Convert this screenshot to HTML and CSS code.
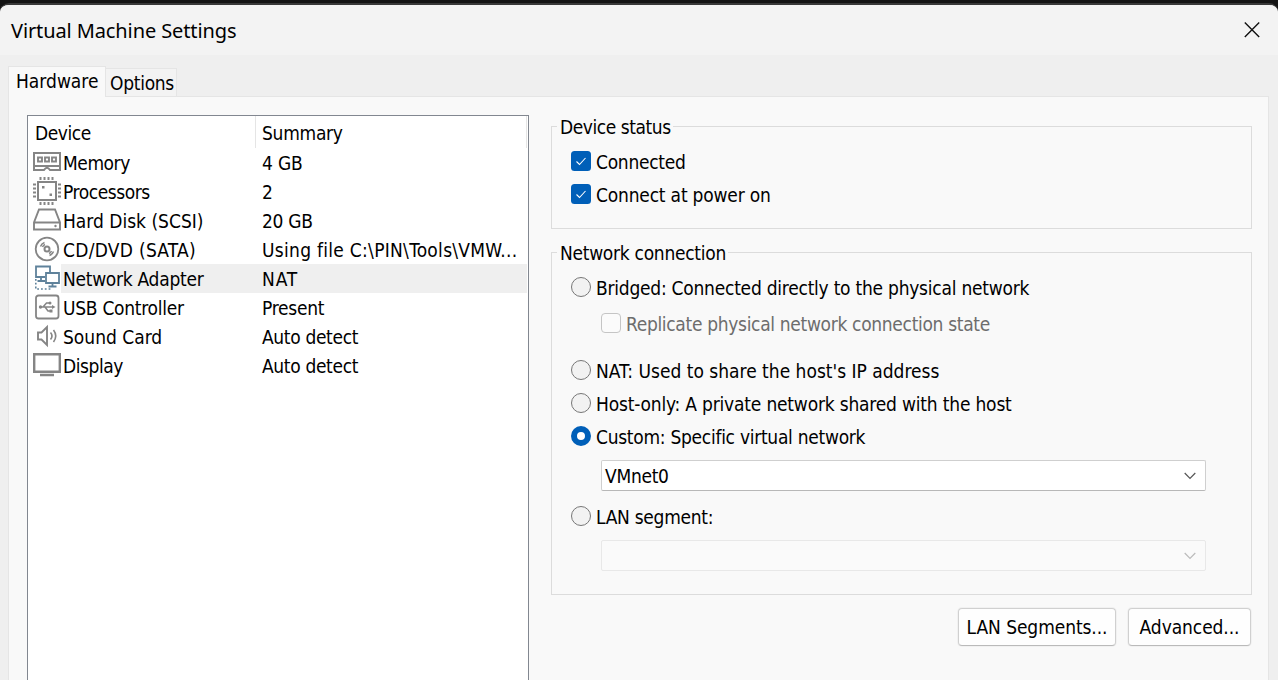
FILE: index.html
```html
<!DOCTYPE html>
<html lang="en">
<head>
<meta charset="utf-8">
<title>Virtual Machine Settings</title>
<link rel="stylesheet" href="styles.css">
</head>
<body>
<div class="desktop">
<main class="window">
  <header class="titlebar">
    <h1 class="title">Virtual Machine Settings</h1>
    <svg class="close" width="16" height="16" viewBox="0 0 16 16"><path d="M.8.5l14.400 14.400M15.200.5L.8 14.900"/></svg>
  </header>
  <nav class="tabs">
    <div class="tab active"><span class="t even">Hardware</span></div>
    <div class="tab"><span class="t tight">Options</span></div>
  </nav>
  <section class="panel">
    <div class="devices">
      <div class="row head"><div class="name"><span class="t tighter">Device</span></div><div class="summary"><span class="t tight">Summary</span></div></div>
      <div class="row"><svg class="icon" viewBox="0 0 28 28"><path d="M1 5h26v17H17q-3-4.500-6 0H1zM1 18h26" stroke-width="2"/><path d="M5 9.500h4v4H5zM12 9.500h4v4h-4zM19 9.500h4v4h-4z" stroke-width="1.900"/></svg><div class="name"><span class="t tighter">Memory</span></div><div class="summary"><span class="t">4 GB</span></div></div>
      <div class="row"><svg class="icon" viewBox="0 0 28 28"><path d="M5 5h18v18H5z" stroke-width="2"/><path d="M7.500 0v3M11.500 0v3M15.500 0v3M19.500 0v3M7.500 25v3M11.500 25v3M15.500 25v3M19.500 25v3M0 7.500h3M0 11.500h3M0 15.500h3M0 19.500h3M25 7.500h3M25 11.500h3M25 15.500h3M25 19.500h3" stroke-width="2"/><path d="M9 9h2.500v2.500H9zM16.500 16.500H19V19h-2.500z" class="solid"/></svg><div class="name"><span class="t tighter">Processors</span></div><div class="summary"><span class="t">2</span></div></div>
      <div class="row"><svg class="icon" viewBox="0 0 28 28"><path d="M6 3.500h16l5 13v7H1v-7zM1 16.500h26" stroke-width="1.900"/><circle cx="22.500" cy="20" r="1.200" class="solid"/></svg><div class="name"><span class="t even">Hard Disk (SCSI)</span></div><div class="summary"><span class="t nudge">20 GB</span></div></div>
      <div class="row"><svg class="icon" viewBox="0 0 28 28"><circle cx="14" cy="14" r="11.300" stroke-width="1.800"/><circle cx="14" cy="14" r="2.500" stroke-width="2"/><path d="M7.500 11.500q1-3 4-4M20.500 16.500q-1 3-4 4M9.500 12q.8-1.800 2.500-2.500M18.500 16q-.8 1.800-2.500 2.500" stroke-width="1.500"/></svg><div class="name"><span class="t wide">CD/DVD (SATA)</span></div><div class="summary"><span class="t wide">Using file C:\PIN\Tools\VMW...</span></div></div>
      <div class="row selected"><svg class="icon blue" viewBox="0 0 28 28"><path d="M12 13H3V2.500h14V8M8 13v3.500M4.500 17H12" stroke-width="1.800"/><path d="M13 9h13v10H13zM19.500 19v3.500M15.500 22.500h8" stroke-width="1.800"/><path d="M2.800 15v10h15" stroke-width="1.600" stroke-dasharray="1.800 2"/></svg><div class="name"><span class="t tight">Network Adapter</span></div><div class="summary"><span class="t nat">NAT</span></div></div>
      <div class="row"><svg class="icon" viewBox="0 0 28 28"><rect x="3" y="2.500" width="22.500" height="23" rx="2.500" stroke-width="1.800"/><path d="M7 14h13M10 14l3.500-4H16M12 14l3 4h2" stroke-width="1.500"/><circle cx="7.500" cy="14" r="1.700" class="solid"/><circle cx="17" cy="10" r="1.500" class="solid"/><path d="M19 12l3.500 2-3.500 2zM16.500 16.500h3v3h-3z" class="solid"/></svg><div class="name"><span class="t tight">USB Controller</span></div><div class="summary"><span class="t tight">Present</span></div></div>
      <div class="row"><svg class="icon" viewBox="0 0 28 28"><path d="M5 10.500h3.500L14 5v18l-5.500-5.500H5z" stroke-width="1.900"/><path d="M17.500 10.500q3 3.500 0 7M20.500 8q4.500 6 0 12" stroke-width="1.600"/></svg><div class="name"><span class="t even">Sound Card</span></div><div class="summary"><span class="t auto">Auto detect</span></div></div>
      <div class="row"><svg class="icon" viewBox="0 0 28 28"><path d="M1.200 3.200h25.600v17.600H1.200z" stroke-width="2.400"/><path d="M7 24h14" stroke-width="2.500"/></svg><div class="name"><span class="t tighter">Display</span></div><div class="summary"><span class="t auto">Auto detect</span></div></div>
    </div>
    <div class="settings">
      <fieldset class="group status">
        <legend><span class="t tighter">Device status</span></legend>
        <label class="option"><svg class="mark" viewBox="0 0 20 20"><rect width="20" height="20" rx="3.500" class="fill"/><path class="tick" d="M5.500 10.500l3 3 6-6.500"/></svg><span class="t tight">Connected</span></label>
        <label class="option"><svg class="mark" viewBox="0 0 20 20"><rect width="20" height="20" rx="3.500" class="fill"/><path class="tick" d="M5.500 10.500l3 3 6-6.500"/></svg><span class="t">Connect at power on</span></label>
      </fieldset>
      <fieldset class="group network">
        <legend><span class="t tight">Network connection</span></legend>
        <label class="option"><span class="mark radio"></span><span class="t long">Bridged: Connected directly to the physical network</span></label>
        <label class="option sub"><span class="mark box"></span><span class="t replicate">Replicate physical network connection state</span></label>
        <label class="option"><span class="mark radio"></span><span class="t even">NAT: Used to share the host's IP address</span></label>
        <label class="option"><span class="mark radio"></span><span class="t">Host-only: A private network shared with the host</span></label>
        <label class="option"><span class="mark radio on"></span><span class="t tight">Custom: Specific virtual network</span></label>
        <div class="select"><span class="t tight">VMnet0</span><svg width="12" height="8" viewBox="0 0 12 8"><path d="M.7 1l5.300 5.500L11.300 1"/></svg></div>
        <label class="option"><span class="mark radio"></span><span class="t tight">LAN segment:</span></label>
        <div class="select disabled"><span></span><svg width="12" height="8" viewBox="0 0 12 8"><path d="M.7 1l5.300 5.500L11.300 1"/></svg></div>
      </fieldset>
      <div class="buttons"><button class="btn lan"><span class="t button-label">LAN Segments...</span></button><button class="btn adv"><span class="t button-label">Advanced...</span></button></div>
    </div>
  </section>
</main>
</div>
</body>
</html>
```
FILE: styles.css
```css
* { box-sizing: border-box; }
body { margin: 0; background: #fff; color: #000; font: 19px/29px "DejaVu Sans Condensed", "DejaVu Sans", sans-serif; font-stretch: condensed; }
.t { white-space: pre; letter-spacing: -.19px; }
.tight { letter-spacing: -.28px; }
.tighter { letter-spacing: -.44px; }
.auto { letter-spacing: -.34px; }
.long { letter-spacing: -.24px; }
.replicate { letter-spacing: -.32px; }
.button-label { letter-spacing: -.08px; }
.even { letter-spacing: 0; }
.nudge { letter-spacing: -.3px; }
.wide { letter-spacing: .28px; }
.nat { letter-spacing: .9px; }
.desktop { height: 680px; padding-top: 3px; background: #141414; }
.window { height: 677px; display: flex; flex-direction: column; background: #efefef; border-top: 2px solid #383838; border-radius: 9px 9px 0 0; overflow: hidden; }
.titlebar { flex: none; height: 50px; display: flex; align-items: center; justify-content: space-between; padding: 0 18px 0 11px; background: #f3f3f3; }
.title { margin: 0; padding-top: 1px; font: 20px/28px "Noto Sans", sans-serif; letter-spacing: -.11px; }
.close { fill: none; stroke: #111; stroke-width: 1.4; }
.tabs { flex: none; height: 41px; display: flex; align-items: flex-end; padding-left: 8px; }
.tab { width: 71px; height: 28px; padding: 0 0 0 4px; border: 1px solid #e5e5e5; border-left: 0; border-bottom: 0; background: #f3f3f3; }
.tab.active { position: relative; width: 98px; height: 31px; margin-bottom: -1px; padding-left: 7px; border-left: 1px solid #e5e5e5; background: #f9f9f9; }
.panel { flex: 1; min-height: 0; display: flex; gap: 22px; margin: 0 9px 0 8px; padding: 18px 16px 0 18px; background: #f9f9f9; border: 1px solid #e5e5e5; border-bottom: 0; }
.devices { width: 502px; background: #fff; border: 1px solid #828790; border-bottom: 0; }
.row { height: 29px; display: flex; padding-left: 5px; padding-right: 1px; line-height: 31px; }
.icon { flex: none; width: 28px; height: 28px; fill: none; stroke: #858585; }
.icon .solid { fill: #858585; stroke: none; }
.icon.blue { stroke: #5f829b; }
.name { width: 194px; padding-left: 2px; }
.summary { flex: 1; padding-left: 7px; }
.head { height: 32px; line-height: 35px; }
.head .name { width: 222px; }
.head .summary { border: solid #e5e5e5; border-width: 0 1px; padding-left: 6px; }
.selected .name, .selected .summary { background: #efefef; }
.settings { width: 701px; padding-top: 11px; }
.group { position: relative; margin: 0; padding: 20px 0 0 19px; border: 1px solid #dcdcdc; min-width: 0; }
.group legend { position: absolute; top: -14px; left: 5px; padding: 0 2px 0 3px; background: #f9f9f9; }
.status { height: 103px; margin-bottom: 23px; }
.network { height: 343px; }
.option { display: flex; height: 29px; gap: 5px; margin-bottom: 4px; line-height: 31px; }
.mark { flex: none; width: 20px; height: 20px; margin-top: 4px; }
.fill { fill: #005fb8; }
.tick { fill: none; stroke: #fff; stroke-width: 1.1; }
.radio { border: 1px solid #777; border-radius: 50%; background: #f2f2f2; }
.radio.on { border: 6px solid #005fb8; background: #fff; }
.box { border: 1px solid #c5c5c5; border-radius: 4px; background: #fbfbfb; }
.sub { margin: 7px 0 18px 30px; color: #6d6d6d; }
.select { width: 605px; height: 31px; display: flex; align-items: center; justify-content: space-between; margin: 9px 0 11px 30px; padding: 0 9px 0 3px; border: 1px solid #cfcfcf; border-bottom-color: #b8b8b8; border-radius: 2px; background: #fff; }
.select .t { padding-top: 1px; }
.select svg { fill: none; stroke: #555; stroke-width: 1.2; }
.select.disabled { margin-bottom: 0; border-color: #e8e8e8; background: #fafafa; }
.select.disabled svg { stroke: #bbb; }
.buttons { display: flex; justify-content: flex-end; gap: 12px; padding: 13px 1px 0 0; }
.btn { height: 38px; padding: 1px 0 0; border: 1px solid #d0d0d0; border-bottom-color: #bababa; border-radius: 4px; background: #fefefe; color: #000; font: inherit; box-shadow: 0 0 0 1px #f1f1f1; }
.lan { width: 158px; }
.adv { width: 123px; }
```
